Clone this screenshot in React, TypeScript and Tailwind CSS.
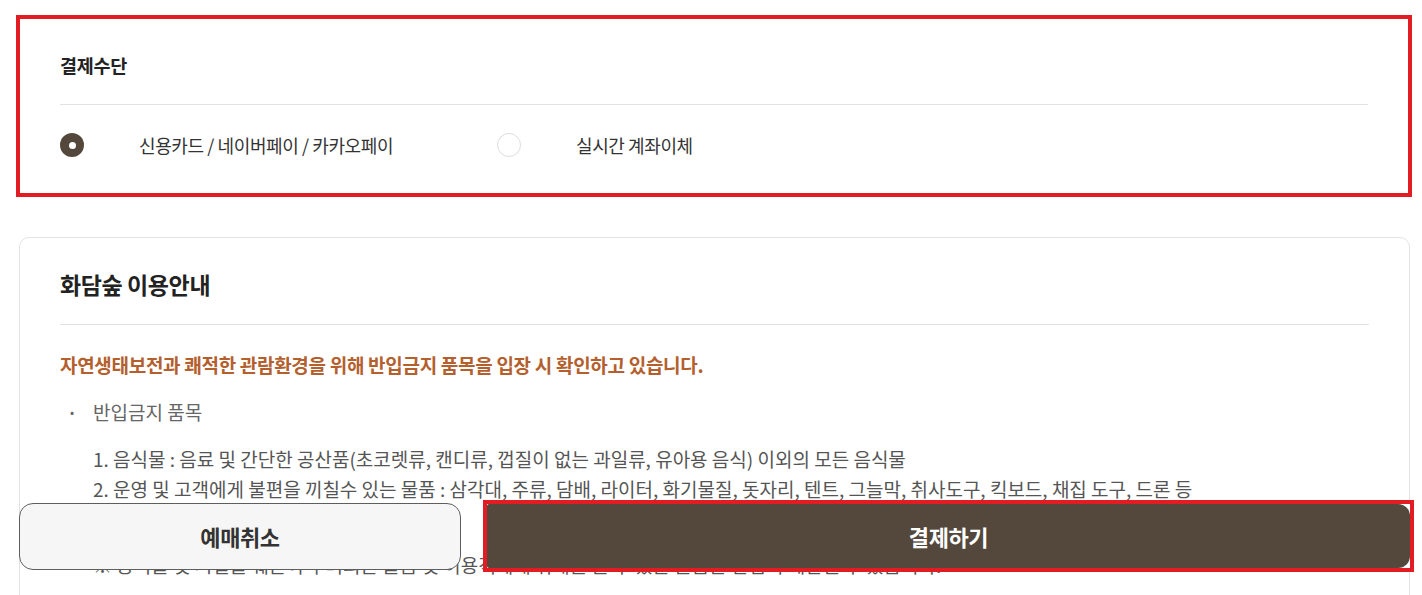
import React from "react";

const font = "font-['Noto_Sans_CJK_KR','Noto_Sans',sans-serif]";

export default function App() {
  const [method, setMethod] = React.useState("card");

  const options = [
    { id: "card", label: "신용카드 / 네이버페이 / 카카오페이" },
    { id: "bank", label: "실시간 계좌이체" }
  ];

  return (
    <div className={`${font} relative min-h-[595px] bg-white text-[#222]`}>
      {/* 결제수단 */}
      <section className="ml-[16px] mt-[15px] w-[1396px] border-4 border-[#e31b23] bg-white px-[40px] pb-[36px] pt-[33px]">
        <h3 className="text-[18.5px] font-semibold leading-[26px] tracking-[-0.3px]">결제수단</h3>
        <div className="mt-[26px] border-t border-[#e2e2e2]" />
        <div className="mt-[28px] flex items-center">
          {options.map((o, i) => (
            <label
              key={o.id}
              onClick={() => setMethod(o.id)}
              className={`flex cursor-pointer items-center ${i === 0 ? "w-[437px]" : ""}`}
            >
              {method === o.id ? (
                <span className="flex h-[24px] w-[24px] items-center justify-center rounded-full bg-[#54483c]">
                  <span className="h-[7px] w-[7px] rounded-full bg-white" />
                </span>
              ) : (
                <span className="h-[24px] w-[24px] rounded-full border border-[#dcdcdc] bg-white" />
              )}
              <span className="ml-[55px] text-[18px] leading-[24px] tracking-[-0.4px] text-[#333]">{o.label}</span>
            </label>
          ))}
        </div>
      </section>

      {/* 이용안내 */}
      <section className="ml-[19px] mt-[40px] w-[1391px] rounded-[10px] border border-[#e3e3e3] px-[40px] pb-[80px] pt-[31px]">
        <h3 className="text-[23px] font-semibold leading-[30px] tracking-[-0.4px]">화담숲 이용안내</h3>
        <div className="mt-[25px] border-t border-[#e2e2e2]" />
        <p className="mt-[27px] text-[19px] font-semibold leading-[26px] tracking-[-0.3px] text-[#b3602e]">
          자연생태보전과 쾌적한 관람환경을 위해 반입금지 품목을 입장 시 확인하고 있습니다.
        </p>
        <div className="mt-[21px] flex items-center text-[19px] leading-[26px] text-[#666]">
          <span className="w-[33px] pl-[10px] text-[12px]">•</span>
          <span>반입금지 품목</span>
        </div>
        <ol className="mt-[19px] pl-[33px] text-[19px] leading-[30px] text-[#555]">
          <li>1. 음식물 : 음료 및 간단한 공산품(초코렛류, 캔디류, 껍질이 없는 과일류, 유아용 음식) 이외의 모든 음식물</li>
          <li>2. 운영 및 고객에게 불편을 끼칠수 있는 물품 : 삼각대, 주류, 담배, 라이터, 화기물질, 돗자리, 텐트, 그늘막, 취사도구, 킥보드, 채집 도구, 드론 등</li>
          <li>3. 애완동물 (단, 장애인 보조견은 입장 가능)</li>
        </ol>
        <p className="mt-[16px] pl-[33px] text-[19px] leading-[30px] text-[#555]">
          ※ 동식물 및 시설물 훼손이 우려되는 물품 및 이용객에게 위해를 줄 수 있는 물품은 반입이 제한될 수 있습니다.
        </p>
      </section>

      {/* 하단 버튼 */}
      <div className="fixed bottom-[23px] left-0 right-0 flex items-center gap-[22px] pl-[19px]">
        <button className="flex h-[67px] w-[442px] items-center justify-center rounded-[14px] border-[1.5px] border-[#5e5e5e] bg-[#f6f6f6] text-[22px] font-bold tracking-[-0.4px] text-[#333]">
          예매취소
        </button>
        <div className="h-[72px] w-[931px] border-4 border-[#e31b23] bg-white">
          <button className="flex h-full w-full items-center justify-center rounded-l-[2px] rounded-r-[12px] bg-[#54483c] text-[22px] font-bold tracking-[-0.4px] text-white">
            결제하기
          </button>
        </div>
      </div>
    </div>
  );
}
